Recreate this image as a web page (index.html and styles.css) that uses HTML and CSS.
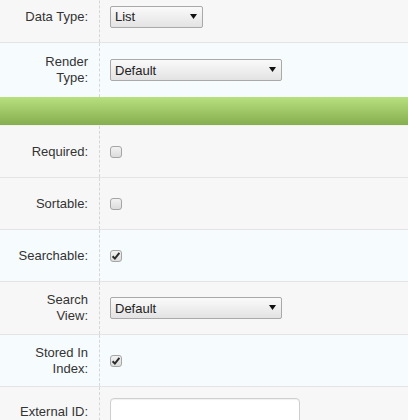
FILE: index.html
```
<!DOCTYPE html>
<html>
<head>
<meta charset="utf-8">
<link rel="stylesheet" href="styles.css">
</head>
<body>
<div class="form">
  <div class="row gray r51">
    <div class="label">Data Type:</div>
    <div class="field">
      <span class="select w93"><span class="val">List</span><svg class="arrow" width="7" height="5" viewBox="0 0 7 5"><path d="M0 0H7L3.5 5Z" fill="#111"/></svg></span>
    </div>
  </div>
  <div class="row blue r54 noborder">
    <div class="label">Render<br>Type:</div>
    <div class="field">
      <span class="select w172"><span class="val">Default</span><svg class="arrow" width="7" height="5" viewBox="0 0 7 5"><path d="M0 0H7L3.5 5Z" fill="#111"/></svg></span>
    </div>
  </div>
  <div class="bar"></div>
  <div class="row gray r51">
    <div class="label">Required:</div>
    <div class="field"><span class="check"></span></div>
  </div>
  <div class="row gray r51">
    <div class="label">Sortable:</div>
    <div class="field"><span class="check"></span></div>
  </div>
  <div class="row blue r51">
    <div class="label">Searchable:</div>
    <div class="field"><span class="check"><svg width="10" height="10" viewBox="0 0 10 10"><path d="M1.6 5.2L3.9 7.6L8.4 1.9" fill="none" stroke="#2b2b2b" stroke-width="2"/></svg></span></div>
  </div>
  <div class="row gray r52">
    <div class="label">Search<br>View:</div>
    <div class="field">
      <span class="select w172"><span class="val">Default</span><svg class="arrow" width="7" height="5" viewBox="0 0 7 5"><path d="M0 0H7L3.5 5Z" fill="#111"/></svg></span>
    </div>
  </div>
  <div class="row blue r51">
    <div class="label">Stored In<br>Index:</div>
    <div class="field"><span class="check"><svg width="10" height="10" viewBox="0 0 10 10"><path d="M1.6 5.2L3.9 7.6L8.4 1.9" fill="none" stroke="#2b2b2b" stroke-width="2"/></svg></span></div>
  </div>
  <div class="row gray r49 noborder">
    <div class="label">External ID:</div>
    <div class="field"><span class="text"></span></div>
  </div>
</div>
</body>
</html>
```
FILE: styles.css
```
html, body {
  margin: 0;
  padding: 0;
  background: #f7f7f7;
  overflow: hidden;
}
body {
  font-family: "Liberation Sans", Arial, sans-serif;
  font-size: 13px;
  color: #333;
}
.form {
  margin-top: -9px;
  display: flex;
  flex-direction: column;
}
.row {
  display: flex;
  box-sizing: border-box;
  border-bottom: 1px solid #e4e4e4;
}
.row.noborder { border-bottom: none; }
.gray { background: #f7f7f7; }
.blue { background: #f6fbfe; }
.r51 { height: 52px; }
.r52 { height: 53px; }
.r54 { height: 54px; }
.r49 { height: 49px; }
.label {
  width: 100px;
  box-sizing: border-box;
  border-right: 1px dashed #d6d6d6;
  padding-right: 11px;
  display: flex;
  align-items: center;
  justify-content: flex-end;
  text-align: right;
  line-height: 16px;
}
.field {
  flex: 1;
  display: flex;
  align-items: center;
  padding-left: 10px;
}
.bar {
  height: 28px;
  background: linear-gradient(#b8e07f, #86ae4e);
  border-bottom: 1px solid #eef2ea;
}
.select {
  box-sizing: border-box;
  height: 22px;
  border: 1px solid #a9a9a9;
  border-radius: 2px;
  background: linear-gradient(#fafafa, #e3e3e3);
  display: flex;
  align-items: center;
  justify-content: space-between;
  padding: 0 5px 0 4px;
  color: #222;
  font-size: 13px;
}
.w93 { width: 93px; }
.w172 { width: 172px; }
.arrow { display: block; margin-top: -1px; }
.check {
  box-sizing: border-box;
  width: 12px;
  height: 12px;
  border: 1px solid #a5a5a5;
  border-radius: 3px;
  background: linear-gradient(#f2f2f2, #dcdcdc);
  display: flex;
  align-items: center;
  justify-content: center;
}
.check svg { display: block; }
.text {
  box-sizing: border-box;
  width: 190px;
  height: 28px;
  background: #fff;
  border: 1px solid #cfcfcf;
  border-radius: 4px;
  box-shadow: inset 0 1px 1px rgba(0,0,0,0.06);
  margin-top: 1px;
}
```
